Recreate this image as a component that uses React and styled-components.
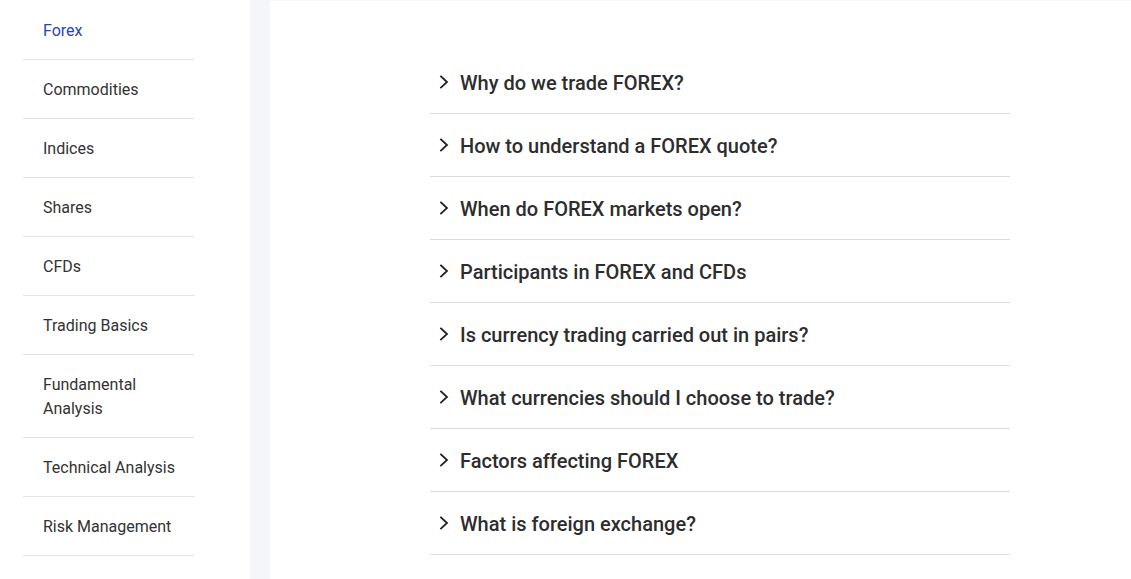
import React from "react";
import styled, { createGlobalStyle } from "styled-components";

const GlobalStyle = createGlobalStyle`
  html, body {
    margin: 0;
    padding: 0;
    background: #fff;
    font-family: Roboto, "Liberation Sans", sans-serif;
  }
`;

const topics = [
  "Forex",
  "Commodities",
  "Indices",
  "Shares",
  "CFDs",
  "Trading Basics",
  "Fundamental Analysis",
  "Technical Analysis",
  "Risk Management",
];

const questions = [
  "Why do we trade FOREX?",
  "How to understand a FOREX quote?",
  "When do FOREX markets open?",
  "Participants in FOREX and CFDs",
  "Is currency trading carried out in pairs?",
  "What currencies should I choose to trade?",
  "Factors affecting FOREX",
  "What is foreign exchange?",
];

const Chevron = () => (
  <svg width="12" height="16" viewBox="0 0 12 16" fill="none">
    <path d="M3 2.5L9 8L3 13.5" stroke="#222" strokeWidth="1.8" strokeLinecap="square" />
  </svg>
);

const App = () => {
  return (
    <React.Fragment>
      <GlobalStyle />
      <Page>
        <Sidebar>
          <TopicList>
            {topics.map((t, i) => (
              <Topic key={t} active={i === 0}>
                {t === "Fundamental Analysis" ? (
                  <>
                    Fundamental
                    <br />
                    Analysis
                  </>
                ) : (
                  t
                )}
              </Topic>
            ))}
          </TopicList>
        </Sidebar>
        <Divider />
        <Main>
          <Accordion>
            {questions.map((q) => (
              <Question key={q}>
                <Chevron />
                <span>{q}</span>
              </Question>
            ))}
          </Accordion>
        </Main>
      </Page>
    </React.Fragment>
  );
};

const Page = styled.div`
  display: flex;
  width: 1131px;
  height: 579px;
  overflow: hidden;
`;

const Sidebar = styled.aside`
  width: 250px;
  flex-shrink: 0;
  padding-left: 23px;
  box-sizing: border-box;
`;

const TopicList = styled.ul`
  list-style: none;
  margin: 0;
  padding: 1px 0 0;
  width: 171px;
`;

const Topic = styled.li`
  padding: 18px 8px 16px 20px;
  font-size: 16px;
  line-height: 24px;
  white-space: nowrap;
  color: ${(p) => (p.active ? "#2845b8" : "#333")};
  border-bottom: 1px solid #e3e3e3;
`;

const Divider = styled.div`
  width: 20px;
  flex-shrink: 0;
  background: #f5f6fa;
`;

const Main = styled.main`
  flex: 1;
  border-top: 1px solid #f7f7f7;
  padding: 50px 0 0 160px;
`;

const Accordion = styled.div`
  width: 580px;
`;

const Question = styled.div`
  display: flex;
  align-items: center;
  gap: 10px;
  height: 62px;
  padding-left: 8px;
  border-bottom: 1px solid #dcdcdc;
  font-size: 20px;
  font-weight: 500;
  color: #2d2d2d;

  svg {
    flex-shrink: 0;
  }

  span {
    padding-top: 2px;
  }
`;

export default App;
